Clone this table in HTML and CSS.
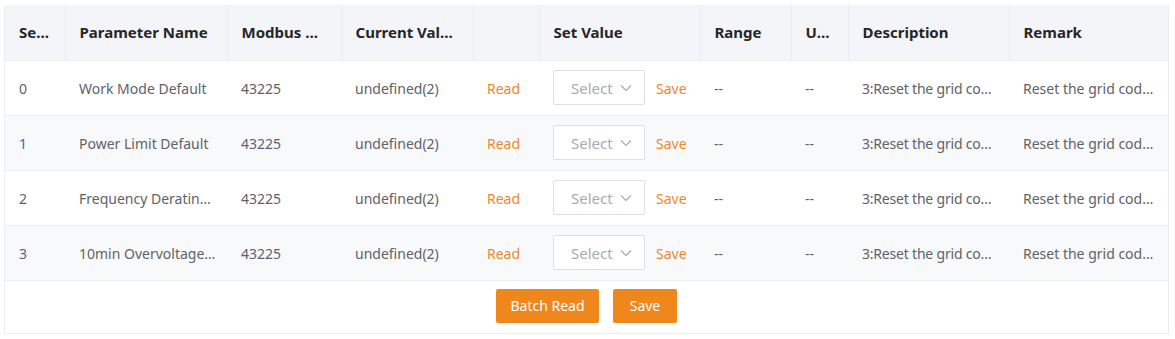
FILE: index.html
```html
<html>
<head>
	<meta charset="UTF-8">
	<link rel="stylesheet" href="styles.css">
</head>
<body>
	<div class="param-panel">
		<table class="param-table">
			<colgroup>
				<col style="width:60px">
				<col style="width:162px">
				<col style="width:114px">
				<col style="width:132px">
				<col style="width:66px">
				<col style="width:161px">
				<col style="width:91px">
				<col style="width:57px">
				<col style="width:161px">
				<col>
			</colgroup>
			<thead>
				<tr>
					<th>Serial No.</th>
					<th>Parameter Name</th>
					<th>Modbus Address</th>
					<th>Current Value</th>
					<th></th>
					<th>Set Value</th>
					<th>Range</th>
					<th>Unit</th>
					<th>Description</th>
					<th>Remark</th>
				</tr>
			</thead>
			<tbody id="rows">
			</tbody>
		</table>
		<div class="actions">
			<button class="btn">Batch Read</button>
			<button class="btn btn-small">Save</button>
		</div>
	</div>
	<script type="text/javascript">
	var params = [
		"Work Mode Default",
		"Power Limit Default",
		"Frequency Derating Default",
		"10min Overvoltage Default"
	]
	var chevron = '<svg width="12" height="8" viewBox="0 0 12 8"><path d="M1 1.5 L6 6.5 L11 1.5" fill="none" stroke="#a8abb2" stroke-width="1.2"/></svg>'
	var tbody = document.getElementById("rows")
	params.forEach(function (name, index) {
		var tr = document.createElement("tr")
		tr.innerHTML =
			'<td class="' + (index == 1 ? "serial active" : "serial") + '">' + index + '</td>' +
			'<td class="name">' + name + '</td>' +
			'<td>43225</td>' +
			'<td>undefined(2)</td>' +
			'<td><span class="link">Read</span></td>' +
			'<td class="set-cell"><div class="set-value"><span class="select"><span class="placeholder">Select</span>' + chevron + '</span><span class="link">Save</span></div></td>' +
			'<td>--</td>' +
			'<td>--</td>' +
			'<td class="desc">3:Reset the grid code to default</td>' +
			'<td>Reset the grid code parameters</td>'
		tbody.appendChild(tr)
	})
	</script>
</body>
</html>
```

FILE: styles.css
```css
body {
	margin: 0;
	padding: 5px 0 0 4px;
	background: #fff;
	font-family: "Noto Sans", "Open Sans", sans-serif;
}
.param-panel {
	width: 1163px;
	border: 1px solid #ebeef5;
	border-top: none;
}
.param-table {
	width: 100%;
	table-layout: fixed;
	border-collapse: collapse;
}
.param-table th,
.param-table td {
	padding: 0 14px;
	text-align: left;
	white-space: nowrap;
	overflow: hidden;
	text-overflow: ellipsis;
	border-bottom: 1px solid #ebeef5;
}
.param-table th {
	height: 55px;
	background-color: #f3f5f9;
	color: #262626;
	font-size: 15px;
	font-weight: bold;
	border-right: 1px solid #e8ebf1;
}
.param-table th:last-child {
	border-right: none;
}
.param-table td {
	height: 55px;
	padding-top: 2px;
	color: #606266;
	font-size: 14px;
}
.param-table td.name {
	padding-right: 10px;
}
.param-table td.desc {
	letter-spacing: -0.2px;
}
.param-table tbody tr:nth-child(even) td {
	background-color: #f8f9fb;
}
.param-table td.active {
	color: #3f68a3;
}
.link {
	color: #f0862a;
	cursor: pointer;
}
.param-table td.set-cell {
	overflow: visible;
	padding-right: 0;
	padding-top: 0;
}
.set-value {
	display: flex;
	align-items: center;
	gap: 11px;
}
.set-value .link {
	padding-top: 2px;
}
.set-value .select {
	display: flex;
	align-items: center;
	box-sizing: border-box;
	width: 92px;
	height: 35px;
	padding: 0 12px 0 17px;
	border: 1px solid #dcdfe6;
	border-radius: 2px;
	background: #fff;
}
.set-value .placeholder {
	flex: 1;
	color: #a8abb2;
	font-size: 15px;
}
.actions {
	display: flex;
	justify-content: center;
	gap: 14px;
	padding: 8px 0 10px;
}
.btn {
	height: 34px;
	width: 103px;
	border: none;
	border-radius: 2px;
	background-color: #ef871c;
	color: #fff;
	font-family: inherit;
	font-size: 14px;
	cursor: pointer;
}
.btn-small {
	width: 64px;
}
```
